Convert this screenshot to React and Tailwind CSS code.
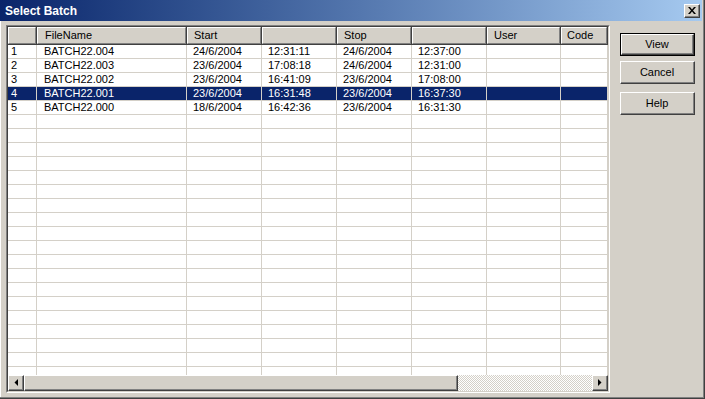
import React from 'react';

const cols = [
    { w: 'w-[29px]', label: '', pad: 'pl-[3px]' },
    { w: 'w-[150px]', label: 'FileName', pad: 'pl-[7px]' },
    { w: 'w-[75px]', label: 'Start', pad: 'pl-[6px]' },
    { w: 'w-[75px]', label: '', pad: 'pl-[6px]' },
    { w: 'w-[75px]', label: 'Stop', pad: 'pl-[6px]' },
    { w: 'w-[75px]', label: '', pad: 'pl-[6px]' },
    { w: 'w-[74px]', label: 'User', pad: 'pl-[6px]' },
    { w: 'w-[47px]', label: 'Code', pad: 'pl-[5px]' },
];

const batches = [
    ['1', 'BATCH22.004', '24/6/2004', '12:31:11', '24/6/2004', '12:37:00', '', ''],
    ['2', 'BATCH22.003', '23/6/2004', '17:08:18', '24/6/2004', '12:31:00', '', ''],
    ['3', 'BATCH22.002', '23/6/2004', '16:41:09', '23/6/2004', '17:08:00', '', ''],
    ['4', 'BATCH22.001', '23/6/2004', '16:31:48', '23/6/2004', '16:37:30', '', ''],
    ['5', 'BATCH22.000', '18/6/2004', '16:42:36', '23/6/2004', '16:31:30', '', ''],
];

// pad the grid with empty rows so it fills the view
const rows = [...batches, ...Array.from({ length: 20 }).map(() => ['', '', '', '', '', '', '', ''])];

const selected = 3;

// classic raised 3D edge
const Raised = ({ className = '', children }) => (
    <div className={`border-t border-l border-white border-r border-b border-r-[#404040] border-b-[#404040] ${className}`}>
        <div className='h-full w-full border-r border-b border-[#808080] bg-[#d4d0c8] flex items-center justify-center'>
            {children}
        </div>
    </div>
);

const DlgButton = ({ label, isDefault }) => (
    <div className={`w-[75px] h-[23px] ${isDefault ? 'border border-black' : ''}`}>
        <Raised className='h-full w-full'>
            <span className='text-[11px] text-black'>{label}</span>
        </Raised>
    </div>
);

const App = () => {
    return (
        <div className='w-[705px] h-[399px] bg-[#d4d0c8] flex flex-col overflow-hidden font-["Liberation_Sans",Arial,sans-serif] shadow-[inset_-1px_-1px_#404040,inset_-2px_-2px_#808080,inset_1px_0_#ffffff]'>
            {/* Title bar */}
            <div className='h-[21px] mr-[3px] shrink-0 flex items-center justify-between bg-linear-to-r from-[#0a246a] to-[#a6caf0]'>
                <span className='pl-[5px] text-white font-bold text-[12px] leading-none'>Select Batch</span>
                <div className='mr-[2px] w-[16px] h-[14px] border-t border-l border-white border-r border-b border-r-[#404040] border-b-[#404040]'>
                    <div className='h-full w-full border-r border-b border-[#808080] bg-[#d4d0c8] flex items-center justify-center'>
                        <svg width='8' height='7' viewBox='0 0 8 7'>
                            <path d='M0 0h2l2 2.5 2-2.5h2l-3 3.5 3 3.5h-2l-2-2.5-2 2.5h-2l3-3.5z' fill='#000' />
                        </svg>
                    </div>
                </div>
            </div>

            <div className='flex mt-[4px] ml-[6px]'>
                {/* Grid */}
                <div className='w-[604px] h-[368px] border-t border-l border-[#808080] border-r border-b border-r-white border-b-white'>
                    <div className='h-full w-full border-t border-l border-[#404040] border-r border-b border-r-[#d4d0c8] border-b-[#d4d0c8] flex flex-col bg-white'>
                        <div className='flex-1 overflow-hidden'>
                            {/* Header */}
                            <div className='flex h-[18px]'>
                                {cols.map((c, i) => (
                                    <div key={i} className={`${c.w} h-full shrink-0 border-r border-b border-[#404040]`}>
                                        <div className={`h-full border-t border-l border-white border-r border-b border-r-[#808080] border-b-[#808080] bg-[#d4d0c8] flex items-center ${c.pad} text-[11px] text-black`}>
                                            {c.label}
                                        </div>
                                    </div>
                                ))}
                            </div>
                            {/* Rows */}
                            {rows.map((r, ri) => (
                                <div key={ri} className={`flex h-[14px] ${ri === selected ? 'bg-[#0a246a] text-white' : 'text-black'}`}>
                                    {cols.map((c, ci) => (
                                        <div key={ci} className={`${c.w} shrink-0 h-full border-r border-b border-[#d4d0c8] ${c.pad} text-[11px] leading-[13px] whitespace-nowrap overflow-hidden`}>
                                            {r[ci]}
                                        </div>
                                    ))}
                                </div>
                            ))}
                        </div>
                        {/* Horizontal scrollbar */}
                        <div className='h-[16px] shrink-0 flex'>
                            <Raised className='w-[16px] h-full shrink-0'>
                                <svg width='4' height='7' viewBox='0 0 4 7'>
                                    <path d='M4 0v7L0.5 3.5z' fill='#000' />
                                </svg>
                            </Raised>
                            <Raised className='w-[434px] h-full shrink-0' />
                            <div className='flex-1 h-full bg-[repeating-conic-gradient(#d4d0c8_0_25%,#ffffff_0_50%)] bg-size-[2px_2px]' />
                            <Raised className='w-[16px] h-full shrink-0'>
                                <svg width='4' height='7' viewBox='0 0 4 7'>
                                    <path d='M0 0v7L3.5 3.5z' fill='#000' />
                                </svg>
                            </Raised>
                        </div>
                    </div>
                </div>

                {/* Buttons */}
                <div className='ml-[10px] flex flex-col'>
                    <div className='mt-[8px]'>
                        <DlgButton label='View' isDefault />
                    </div>
                    <div className='mt-[5px]'>
                        <DlgButton label='Cancel' />
                    </div>
                    <div className='mt-[8px]'>
                        <DlgButton label='Help' />
                    </div>
                </div>
            </div>
        </div>
    );
};

export default App;
